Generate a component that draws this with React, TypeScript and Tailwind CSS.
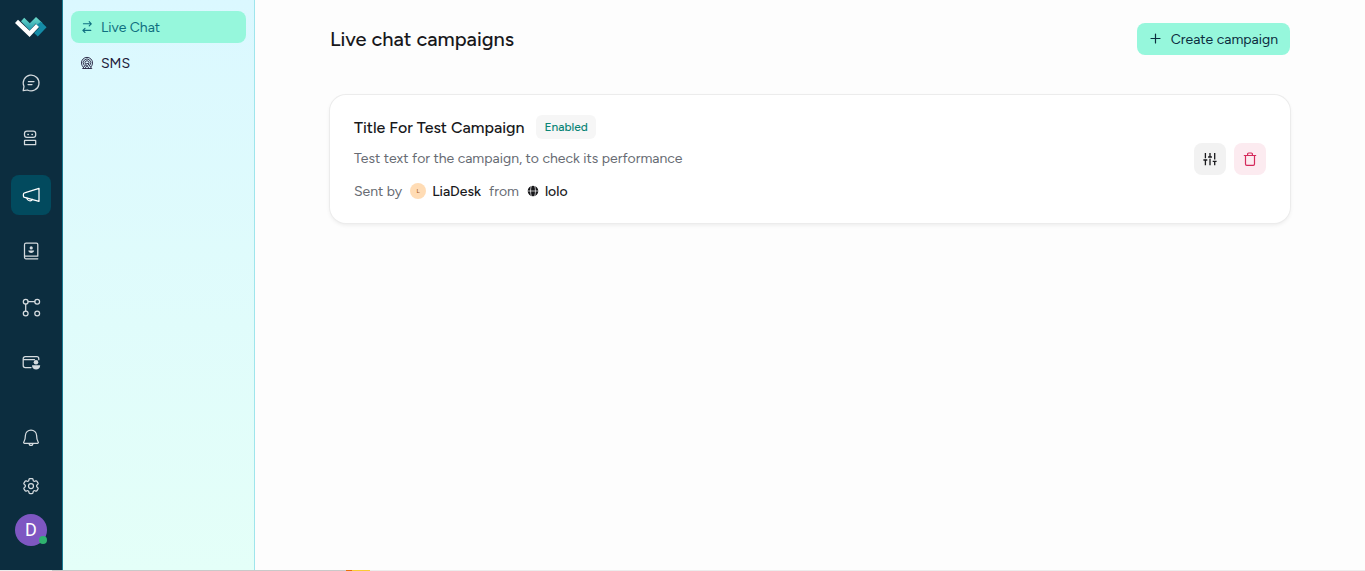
import React from 'react';

interface IconProps {
  className?: string;
}

interface NavItem {
  label: string;
  icon: React.FC<IconProps>;
  active?: boolean;
}

const stroke = {
  viewBox: '0 0 20 20',
  fill: 'none',
  stroke: 'currentColor',
  strokeWidth: 1.25,
  strokeLinecap: 'round',
  strokeLinejoin: 'round',
  'aria-hidden': true,
} as const;

const Logo = () => (
  <svg viewBox="0 0 32 20" className="w-8 h-5" aria-hidden="true">
    <defs>
      <linearGradient id="logoTop" x1="0" y1="0" x2="0" y2="1">
        <stop offset="0" stopColor="#6fdccb" />
        <stop offset="1" stopColor="#1f97ac" />
      </linearGradient>
    </defs>
    <path d="M6 4.2 9.2.8l5.600 5.400L21 0l6.500 6-4 4-2.800-3.400-5.900 6.800z" fill="url(#logoTop)" />
    <path d="M25.9 4.8 31.6 10.3 22.8 19.4l-3.700-3.500 5.300-5.400-2.800-2.600z" fill="#148ba6" />
    <path d="M0 6 3 2.8l11.600 11 6.400-6.900 3 3.100L14.600 20z" fill="#fff" />
  </svg>
);

const ChatIcon: React.FC<IconProps> = ({ className }) => (
  <svg {...stroke} className={className}>
    <path d="M2.200 17.700 3 13.400A7.900 7.900 0 1 1 6.500 17z" />
    <path d="M7.400 8.600h5.600M7 11.600h4" />
  </svg>
);

const BotIcon: React.FC<IconProps> = ({ className }) => (
  <svg {...stroke} className={className}>
    <rect x="3.5" y="2.2" width="11.2" height="6.2" rx="2.4" />
    <rect x="3.5" y="11.4" width="11.2" height="4.3" rx=".3" />
    <path d="M6.900 5.400h.4M11 5.400h.4" strokeWidth="1.5" />
  </svg>
);

const MegaphoneIcon: React.FC<IconProps> = ({ className }) => (
  <svg {...stroke} className={className}>
    <path d="M18 3.300v13L3.600 12.400a1.500 1.500 0 0 1-1.200-1.500V9.400a1.500 1.500 0 0 1 1.200-1.500z" />
    <path d="M5.800 13c.3 3 4.600 3.900 5.600 1.300" />
  </svg>
);

const ContactsIcon: React.FC<IconProps> = ({ className }) => (
  <svg {...stroke} className={className}>
    <path d="M16.800 14.800V3.500A1.300 1.300 0 0 0 15.500 2.200H5A1.500 1.500 0 0 0 3.500 3.700v12.500A1.500 1.500 0 0 0 5 17.800h11.800M4 15.200h12.800" />
    <circle cx="10.2" cy="6.9" r="1.6" fill="currentColor" stroke="none" />
    <path d="M7.300 9.400h5.800c0 3.300-5.800 3.300-5.800 0z" fill="currentColor" stroke="none" />
  </svg>
);

const FlowIcon: React.FC<IconProps> = ({ className }) => (
  <svg {...stroke} className={className}>
    <circle cx="4.7" cy="4.7" r="2.4" />
    <circle cx="16.2" cy="4.7" r="2.4" />
    <circle cx="4.7" cy="16.5" r="2.4" />
    <circle cx="16.2" cy="16.5" r="2.4" />
    <path d="M7.100 4.700h6.700M4.700 7.100v7" />
  </svg>
);

const BillingIcon: React.FC<IconProps> = ({ className }) => (
  <svg {...stroke} className={className}>
    <path d="M10 14.600H4.200a2 2 0 0 1-2-2V5.700a2 2 0 0 1 2-2h11.600a2 2 0 0 1 2 2v1M2.500 6.600h11" />
    <circle cx="15" cy="9.2" r="2.3" fill="currentColor" stroke="none" />
    <path d="M11 12.200h8.200c0 5.800-8.200 5.800-8.200 0z" fill="currentColor" stroke="none" />
  </svg>
);

const BellIcon: React.FC<IconProps> = ({ className }) => (
  <svg {...stroke} className={className}>
    <path d="M10 2a5.600 5.600 0 0 0-5.600 5.600c0 4-1 5.600-1.600 6.400-.4.600-.1 1.300.5 1.300h13.400c.6 0 .9-.7.500-1.300-.6-.8-1.600-2.400-1.600-6.400A5.600 5.600 0 0 0 10 2zM8.200 15.400c0 2.600 3.600 2.600 3.600 0" />
  </svg>
);

const GearIcon: React.FC<IconProps> = ({ className }) => (
  <svg {...stroke} viewBox="0 0 24 24" strokeWidth="1.5" className={className}>
    <path d="M9.594 3.940c.090-.542.560-.940 1.110-.940h2.593c.550 0 1.020.398 1.110.940l.213 1.281c.063.374.313.686.645.870.074.040.147.083.220.127.325.196.720.257 1.075.124l1.217-.456a1.125 1.125 0 0 1 1.370.490l1.296 2.247a1.125 1.125 0 0 1-.260 1.431l-1.003.827c-.293.241-.438.613-.430.992a7.723 7.723 0 0 1 0 .255c-.008.378.137.750.430.991l1.004.827c.424.350.534.955.260 1.430l-1.298 2.247a1.125 1.125 0 0 1-1.369.491l-1.217-.456c-.355-.133-.750-.072-1.076.124a6.470 6.470 0 0 1-.220.128c-.331.183-.581.495-.644.869l-.213 1.281c-.090.543-.560.940-1.110.940h-2.594c-.550 0-1.019-.398-1.110-.940l-.213-1.281c-.062-.374-.312-.686-.644-.870a6.520 6.520 0 0 1-.220-.127c-.325-.196-.720-.257-1.076-.124l-1.217.456a1.125 1.125 0 0 1-1.369-.490l-1.297-2.247a1.125 1.125 0 0 1 .260-1.431l1.004-.827c.292-.240.437-.613.430-.991a6.932 6.932 0 0 1 0-.255c.007-.380-.138-.751-.430-.992l-1.004-.827a1.125 1.125 0 0 1-.260-1.430l1.297-2.247a1.125 1.125 0 0 1 1.370-.491l1.216.456c.356.133.751.072 1.076-.124.072-.044.146-.086.220-.128.332-.183.582-.495.644-.869z" />
    <circle cx="12" cy="12" r="3" />
  </svg>
);

const SwapIcon: React.FC<IconProps> = ({ className }) => (
  <svg {...stroke} viewBox="-1 -1 16 16" strokeWidth="1.1" className={className}>
    <path d="M3.400 3.800h7.900M9.200 1.700l2.100 2.100-2.100 2.100M10.800 10.400H2.900M5 8.300l-2.100 2.100 2.100 2.100" />
  </svg>
);

const BroadcastIcon: React.FC<IconProps> = ({ className }) => (
  <svg {...stroke} viewBox="-1 -1 16 16" strokeWidth=".9" className={className}>
    <path d="M3 10.900a5.600 5.600 0 1 1 8 0" />
    <path d="M4.100 9.300a3.800 3.800 0 1 1 5.800 0" />
    <path d="M5.300 7.800a2 2 0 1 1 3.400 0" />
    <path d="M7 7.300 2.600 12.500h8.800zM7 9.400l-2 3.100M7 9.400l2 3.100" />
  </svg>
);

const PlusIcon: React.FC<IconProps> = ({ className }) => (
  <svg {...stroke} viewBox="0 0 14 14" strokeWidth="1.2" className={className}>
    <path d="M6.500 2v9M2 6.500h9" />
  </svg>
);

const SlidersIcon: React.FC<IconProps> = ({ className }) => (
  <svg {...stroke} viewBox="0 0 14 14" strokeWidth="1.3" strokeLinecap="butt" className={className}>
    <path d="M2.400 1v5.300M2.400 8v5.200M.4 8h3.900M7 1v4M7 6.700v6.500M5.100 5h3.800M11.700 1v6.400M11.700 9.400v3.800M9.700 9.400h3.900" />
  </svg>
);

const TrashIcon: React.FC<IconProps> = ({ className }) => (
  <svg {...stroke} viewBox="0 0 14 14" strokeWidth="1.2" className={className}>
    <path d="M1.300 3.500h11.400M2.500 3.500v8.500A1.300 1.300 0 0 0 3.800 13.300h6.400a1.300 1.300 0 0 0 1.300-1.300V3.500M4.600 3.300V2.200A1.100 1.100 0 0 1 5.700 1h2.600A1.100 1.100 0 0 1 9.400 2.200v1.100" />
  </svg>
);

const GlobeIcon: React.FC<IconProps> = ({ className }) => (
  <svg viewBox="0 0 12 12" className={className} aria-hidden="true">
    <circle cx="6" cy="6" r="5.3" fill="#18181b" />
    <path d="M.5 6h11M4.300.8C3.300 4 3.300 8 4.300 11.200M7.700.8c1 3.200 1 7.200 0 10.400" fill="none" stroke="#fff" strokeWidth=".7" />
  </svg>
);

const MAIN_NAV: NavItem[] = [
  { label: 'Chats', icon: ChatIcon },
  { label: 'Bots', icon: BotIcon },
  { label: 'Campaigns', icon: MegaphoneIcon, active: true },
  { label: 'Contacts', icon: ContactsIcon },
  { label: 'Flows', icon: FlowIcon },
  { label: 'Billing', icon: BillingIcon },
];

const FOOTER_NAV: NavItem[] = [
  { label: 'Notifications', icon: BellIcon },
  { label: 'Settings', icon: GearIcon },
];

const NavButton: React.FC<{ item: NavItem }> = ({ item }) => (
  <button
    type="button"
    aria-label={item.label}
    className={`flex size-10 items-center justify-center rounded-lg ${
      item.active ? 'bg-[#024a5e] text-white' : 'text-[#d5dbdf]'
    }`}
  >
    <item.icon className="size-5" />
  </button>
);

const Sidebar = () => (
  <aside className="flex w-[63px] shrink-0 flex-col items-center border-r border-[#1b7c92] bg-[#0c2d3f] pb-6 pt-[17px]">
    <a href="#" aria-label="Home" className="mb-[26px]">
      <Logo />
    </a>
    <nav className="flex flex-col gap-4">
      {MAIN_NAV.map(item => (
        <NavButton key={item.label} item={item} />
      ))}
    </nav>
    <div className="mt-auto flex flex-col items-center gap-2">
      {FOOTER_NAV.map(item => (
        <NavButton key={item.label} item={item} />
      ))}
      <button type="button" className="relative size-8 rounded-full bg-[#7e57c2] font-['Roboto',sans-serif] text-lg leading-8 text-white">
        D
        <span className="absolute bottom-[2px] right-0 size-2 rounded-full bg-[#2fb36f]" />
      </button>
    </div>
  </aside>
);

const SubMenu = () => (
  <nav className="flex w-48 shrink-0 flex-col gap-1 border-r border-[#9fe5ec] bg-linear-to-b from-[#dbf8ff] to-[#e4fff8] px-2 pt-[11px] text-sm leading-[21px]">
    <a href="#" className="flex h-8 items-center gap-[6px] rounded-lg bg-[#96f7dc] px-2 text-[#0f6f80]">
      <SwapIcon className="size-4" />
      Live Chat
    </a>
    <a href="#" className="flex h-8 items-center gap-[6px] rounded-lg px-2 text-[#1d1b3a]">
      <BroadcastIcon className="size-4" />
      SMS
    </a>
  </nav>
);

const CampaignCard = () => (
  <article className="mt-10 flex items-center justify-between rounded-2xl bg-white px-6 py-5 shadow-[0_0_0_1px_#ececec,0_2px_4px_#00000014]">
    <div className="flex flex-col gap-2 text-sm leading-6 text-[#676b73]">
      <div className="flex h-6 items-center gap-3">
        <h2 className="text-base leading-[21px] font-medium text-[#18181b]">Title For Test Campaign</h2>
        <span className="rounded-md bg-[#f6f6f6] px-2 text-xs leading-6 font-medium text-[#0b8576]">Enabled</span>
      </div>
      <p>Test text for the campaign, to check its performance</p>
      <div className="flex h-6 items-center gap-2 leading-[21px]">
        <span>Sent by</span>
        <span className="flex items-center gap-[6px] font-medium text-[#18181b]">
          <span className="flex size-4 items-center justify-center rounded-full bg-[#ffdcb5] text-[6px] text-[#a55a1c]">L</span>
          LiaDesk
        </span>
        <span>from</span>
        <span className="flex items-center gap-[6px] font-medium text-[#18181b]">
          <GlobeIcon className="size-3" />
          lolo
        </span>
      </div>
    </div>
    <div className="flex gap-2">
      <button type="button" aria-label="Configure" className="flex size-8 items-center justify-center rounded-lg bg-[#f2f2f2] text-[#18181b]">
        <SlidersIcon className="size-[14px]" />
      </button>
      <button type="button" aria-label="Delete" className="flex size-8 items-center justify-center rounded-lg bg-[#fcebf0] text-[#d42a5b]">
        <TrashIcon className="size-[14px]" />
      </button>
    </div>
  </article>
);

export default function App() {
  return (
    <div className="flex h-screen flex-col bg-[#fdfdfd] font-['Figtree','Lato',sans-serif]">
      <div className="flex min-h-0 flex-1">
        <Sidebar />
        <SubMenu />
        <main className="flex-1 px-6 pt-[23px]">
          <div className="mx-auto max-w-[960px]">
            <header className="flex h-8 items-center justify-between">
              <h1 className="text-xl font-medium text-[#18181b]">Live chat campaigns</h1>
              <button type="button" className="flex h-8 items-center gap-2 rounded-lg bg-[#96f7dc] px-3 text-sm leading-[21px] text-[#0c2d3f]">
                <PlusIcon className="size-[14px]" />
                Create campaign
              </button>
            </header>
            <CampaignCard />
          </div>
        </main>
      </div>
      <div className="flex h-px">
        <div className="w-[52px] bg-[#ececec]" />
        <div className="w-[294px] bg-[#c9c9c9]" />
        <div className="w-[6px] bg-[#e8710a]" />
        <div className="w-[18px] bg-[#fbcb33]" />
        <div className="flex-1 bg-[#ececec]" />
      </div>
    </div>
  );
}
